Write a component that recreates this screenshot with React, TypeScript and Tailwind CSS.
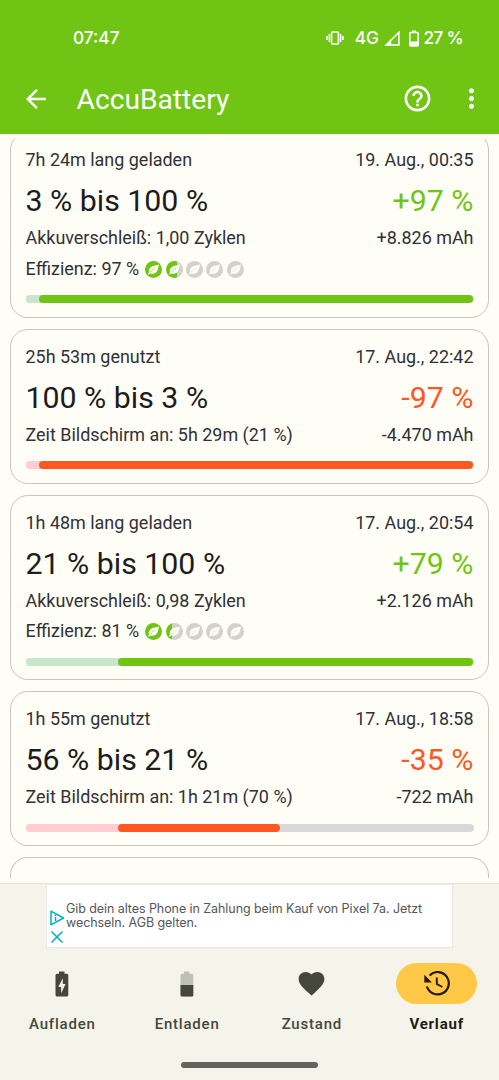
import { clsx } from 'clsx'
import { MdArrowBack, MdFavorite, MdHelpOutline, MdMoreVert } from 'react-icons/md'

type Session = {
  duration: string
  date: string
  range: string
  change: string
  detail: string
  charge: string
  charging: boolean
  efficiency?: string
  leaves?: number
  from: number
  to: number
}

const sessions: Session[] = [
  {
    duration: '7h 24m lang geladen',
    date: '19. Aug., 00:35',
    range: '3 % bis 100 %',
    change: '+97 %',
    detail: 'Akkuverschleiß: 1,00 Zyklen',
    charge: '+8.826 mAh',
    charging: true,
    efficiency: 'Effizienz: 97 %',
    leaves: 1.67,
    from: 3,
    to: 100,
  },
  {
    duration: '25h 53m genutzt',
    date: '17. Aug., 22:42',
    range: '100 % bis 3 %',
    change: '-97 %',
    detail: 'Zeit Bildschirm an: 5h 29m (21 %)',
    charge: '-4.470 mAh',
    charging: false,
    from: 3,
    to: 100,
  },
  {
    duration: '1h 48m lang geladen',
    date: '17. Aug., 20:54',
    range: '21 % bis 100 %',
    change: '+79 %',
    detail: 'Akkuverschleiß: 0,98 Zyklen',
    charge: '+2.126 mAh',
    charging: true,
    efficiency: 'Effizienz: 81 %',
    leaves: 1.35,
    from: 20.6,
    to: 100,
  },
  {
    duration: '1h 55m genutzt',
    date: '17. Aug., 18:58',
    range: '56 % bis 21 %',
    change: '-35 %',
    detail: 'Zeit Bildschirm an: 1h 21m (70 %)',
    charge: '-722 mAh',
    charging: false,
    from: 20.6,
    to: 56.7,
  },
]

function Leaf({ fill }: { fill: number }) {
  return (
    <svg viewBox="0 0 24 24" className="h-[17px] w-[17px]">
      <defs>
        <linearGradient id={`leaf-${fill}`} gradientUnits="userSpaceOnUse" x1="0" y1="0" x2="24" y2="0">
          <stop offset={fill} stopColor="#70c413" />
          <stop offset={fill} stopColor="#d1d2cc" />
        </linearGradient>
      </defs>
      <circle cx="12" cy="12" r="12" fill={`url(#leaf-${fill})`} />
      <path
        d="M20 5C16.5 6.5 11.5 6 8 8.8C5.4 10.9 4.8 13.8 5.8 16L4.3 18.8L5.4 19.4L7.2 17.5C10 18.6 14 18 16.5 15C18.7 12.4 18.8 8 20 5Z"
        fill="#fffef6"
      />
      <path d="M7.8 15.7C9.3 13.5 11.5 11.7 14.5 10.3" fill="none" stroke={`url(#leaf-${fill})`} strokeWidth=".8" />
    </svg>
  )
}

function SessionCard({ item }: { item: Session }) {
  return (
    <article className="shrink-0 rounded-[18px] border border-[#c6c6bc] px-[14.5px] pt-[15.5px] pb-[13.5px] text-[17.95px] text-[#303136]">
      <div className="flex h-6 items-center justify-between">
        <span>{item.duration}</span>
        <span>{item.date}</span>
      </div>
      <div className="mt-[10.5px] flex h-9 items-center justify-between text-[30.3px]">
        <span className="text-[#1b1b20]">{item.range}</span>
        <span className={item.charging ? 'text-[#70c413]' : 'text-[#ff5722]'}>{item.change}</span>
      </div>
      <div className="mt-[7.5px] flex h-6 items-center justify-between">
        <span>{item.detail}</span>
        <span>{item.charge}</span>
      </div>
      {item.leaves && (
        <div className="mt-[6.5px] flex h-6 items-center">
          <span>{item.efficiency}</span>
          <div className="ml-1.5 flex gap-[3.4px]">
            {[0, 1, 2, 3, 4].map((index) => (
              <Leaf key={index} fill={Math.max(0, Math.min(1, item.leaves! - index))} />
            ))}
          </div>
        </div>
      )}
      <div className="relative mt-3.5 h-2 overflow-hidden rounded-full bg-[#d9d9d9]">
        <div
          className={clsx('h-full', item.charging ? 'bg-[#c8e6c9]' : 'bg-[#ffcdd2]')}
          style={{ width: `${item.from + 2}%` }}
        />
        <div
          className={clsx('absolute top-0 h-full rounded-full', item.charging ? 'bg-[#70c413]' : 'bg-[#ff5722]')}
          style={{ left: `${item.from}%`, width: `${item.to - item.from}%` }}
        />
      </div>
    </article>
  )
}

function StatusBar() {
  return (
    <div className="flex h-[76px] items-center justify-between pr-9 pl-[73px] font-['Inter',sans-serif] text-[17.3px] font-medium">
      <span>07:47</span>
      <div className="flex items-center">
        <svg viewBox="0 0 18 14" className="mr-[11px] h-3.5 w-[18px]" fill="none" stroke="currentColor">
          <rect x="5.6" y="1" width="6.8" height="12" rx=".8" strokeWidth="1.6" />
          <path d="M1 5v4M3.4 3v8M14.6 3v8M17 5v4" strokeWidth="1.6" />
        </svg>
        <span>4G</span>
        <svg viewBox="0 0 16 16" className="ml-[5px] h-4 w-4">
          <path d="M14.9 2.2V14.9H2.2Z" fill="none" stroke="currentColor" strokeWidth="1.5" />
          <path d="M.8 15.5L7.2 9V15.5Z" fill="currentColor" />
        </svg>
        <svg viewBox="0 0 10 17" className="ml-[9px] h-[17px] w-2.5">
          <path d="M3 .5h4v2H3Z" fill="currentColor" />
          <rect x=".8" y="2.5" width="8.4" height="13.5" rx="1" fill="none" stroke="currentColor" strokeWidth="1.6" />
          <path d="M1 11.5h8V16H1Z" fill="currentColor" />
        </svg>
        <span className="ml-[4.5px] tracking-[-0.7px]">27 %</span>
      </div>
    </div>
  )
}

function BatteryIcon({ charging }: { charging?: boolean }) {
  return (
    <svg viewBox="0 0 14 26" className="h-[26px] w-3.5">
      <path
        d="M4 .5H9.5V2.8H11.8Q13.3 2.8 13.3 4.3V24Q13.3 25.5 11.8 25.5H2Q.5 25.5 .5 24V4.3Q.5 2.8 2 2.8H4Z"
        fill={charging ? '#45473c' : '#bfc1b6'}
      />
      {charging ? (
        <path d="M7.8 7.2V13H10.6L6.1 22.3V16H3.3Z" fill="#f4f4eb" />
      ) : (
        <path d="M.5 14H13.3V24Q13.3 25.5 11.8 25.5H2Q.5 25.5 .5 24Z" fill="#45473c" />
      )}
    </svg>
  )
}

function HistoryIcon() {
  return (
    <svg viewBox="0 0 28 26" className="h-[26px] w-7" fill="none" stroke="#291800">
      <path d="M3.9 15.5A11.2 11.2 0 1 0 6.6 4.4" strokeWidth="2.2" />
      <path d="M1.3 3.8V11.5H9Z" fill="#291800" stroke="none" />
      <path d="M13.8 6.6V13L19.4 16" strokeWidth="1.9" />
    </svg>
  )
}

const tabs = [
  { label: 'Aufladen', icon: <BatteryIcon charging /> },
  { label: 'Entladen', icon: <BatteryIcon /> },
  { label: 'Zustand', icon: <MdFavorite className="h-[31px] w-[31px]" /> },
  { label: 'Verlauf', icon: <HistoryIcon />, active: true },
]

export default function App() {
  return (
    <div className="flex h-[1080px] w-[499px] flex-col overflow-hidden bg-[#fffef6] font-['Roboto',sans-serif]">
      <header className="h-[134px] shrink-0 bg-[#70c413] text-white">
        <StatusBar />
        <div className="mt-px flex h-[43px] items-center pr-[12.5px] pl-[20.5px]">
          <MdArrowBack className="h-[30px] w-[30px]" />
          <h1 className="mt-[3px] ml-[26px] text-[28.2px]">AccuBattery</h1>
          <MdHelpOutline className="ml-auto h-[31px] w-[31px]" />
          <MdMoreVert className="ml-[22.5px] h-[31px] w-[31px]" />
        </div>
      </header>

      <main className="mt-[5px] flex h-[739px] shrink-0 flex-col overflow-hidden px-2.5">
        <div className="-mt-[7px] flex flex-col gap-[11px]">
          {sessions.map((item) => (
            <SessionCard key={item.date} item={item} />
          ))}
          <div className="h-12 rounded-t-[18px] border border-b-0 border-[#c6c6bc]" />
        </div>
      </main>

      <footer className="mt-[5px] flex grow flex-col border-t border-[#e5e5df] bg-[#f4f4eb]">
        <div className="mx-auto flex h-[64px] w-[407px] items-center border border-[#e8e9e6] bg-white text-[#55565a]">
          <div className="flex w-[19px] flex-col items-center gap-1 self-end pb-[3px]">
            <svg viewBox="0 0 16 16" className="h-4 w-4" fill="none" stroke="#00aecd" strokeWidth="1.5">
              <path d="M2 1.2L14.5 8L2 14.8Z" strokeLinejoin="round" />
              <path d="M6.5 7V11M6.5 4.5V6" />
            </svg>
            <svg viewBox="0 0 14 14" className="h-3.5 w-3.5" stroke="#00aecd" strokeWidth="1.5">
              <path d="M1.5 1.5L12.5 12.5M12.5 1.5L1.5 12.5" />
            </svg>
          </div>
          <p className="font-['Inter',sans-serif] text-[12.5px] leading-[14px] tracking-[-0.07px]">
            Gib dein altes Phone in Zahlung beim Kauf von Pixel 7a. Jetzt
            <br />
            wechseln. AGB gelten.
          </p>
        </div>
        <nav className="mt-[15px] grid grid-cols-4 text-[#45473c]">
          {tabs.map((tab) => (
            <div key={tab.label} className="flex flex-col items-center">
              <div
                className={clsx(
                  'flex h-[41px] w-[81px] items-center justify-center rounded-full',
                  tab.active && 'bg-[#ffc846]',
                )}
              >
                {tab.icon}
              </div>
              <span
                className={clsx(
                  'mt-2.5 text-[15px] leading-5 tracking-[0.8px]',
                  tab.active ? 'font-bold text-[#1b1c17]' : 'font-medium',
                )}
              >
                {tab.label}
              </span>
            </div>
          ))}
        </nav>
        <div className="mx-auto mt-auto mb-[12.5px] h-[5.5px] w-[137px] rounded-full bg-[#63645c]" />
      </footer>
    </div>
  )
}
